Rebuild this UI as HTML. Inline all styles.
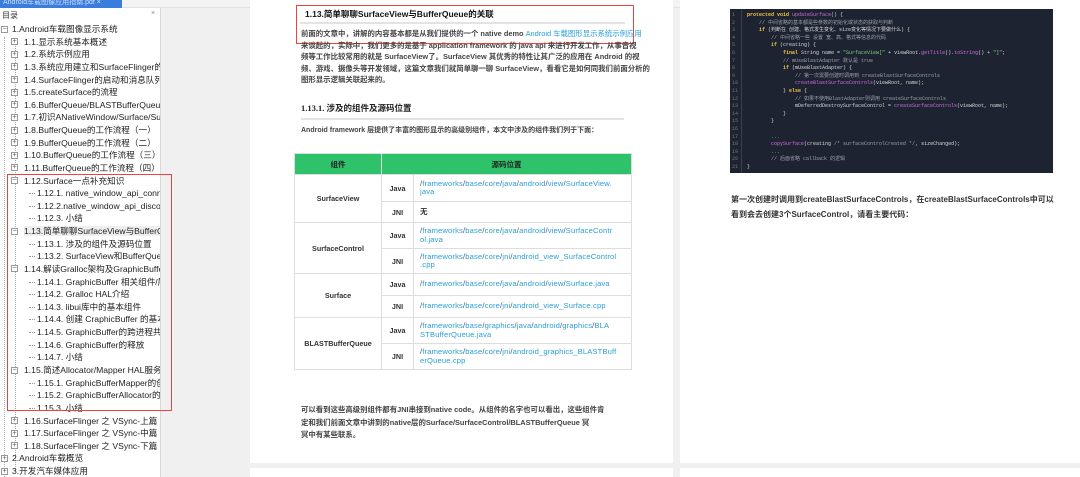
<!DOCTYPE html>
<html><head><meta charset="utf-8">
<style>
*{margin:0;padding:0;box-sizing:border-box}
body{width:1080px;height:477px;overflow:hidden;background:#f0f0f0;font-family:"Liberation Sans","Noto Sans CJK SC",sans-serif;position:relative}
.abs{position:absolute}
#top{left:0;top:0;width:1080px;height:8px;background:#f3f3f3;border-bottom:1px solid #e2e2e2}
#tab{left:0;top:0;width:122px;height:8px;background:#3b7ddd;color:#cfe0fa;font-size:7px;line-height:6px;padding-left:3px;overflow:hidden;white-space:nowrap}
#side{left:0;top:8px;width:161px;height:469px;background:#fff;border-right:1px solid #d8d8d8;overflow:hidden}
#side .hd{position:absolute;left:2px;top:2px;font-size:8px;color:#333}
#side .x{position:absolute;left:151px;top:2px;font-size:7px;color:#888}
.row{position:absolute;font-size:8.6px;color:#222;white-space:nowrap;line-height:10px}
.box{position:absolute;width:7px;height:7px;border:1px solid #999;background:#fff;font-size:7px;line-height:5px;text-align:center;color:#555}
.dash{position:absolute;height:0;border-top:1px dotted #999;width:6px}
.vl{position:absolute;width:0;border-left:1px dotted #aaa}
.red{position:absolute;border:1.5px solid #f04040}
.page{position:absolute;background:#fff}
.p{position:absolute;font-size:7.4px;color:#444;line-height:11.5px;white-space:nowrap;font-weight:bold}
table{position:absolute;left:294px;top:153px;width:338px;border-collapse:collapse;font-size:7px}
td,th{border:1px solid #ddd;color:#333}
th{background:#2ec36b;color:#222;height:21px;font-size:7.5px}
td.c{text-align:center;font-weight:bold;font-size:7.2px}
td.l{color:#2a9fd6;padding:0 6px;line-height:8.5px;font-size:7.6px;letter-spacing:0.15px}
td.l i{font-style:normal;color:#555}
#code{left:730px;top:9px;width:323px;height:164px;background:#1d2330;font-family:"Liberation Mono","Noto Sans CJK SC",monospace;font-size:5px;color:#d8d8d8;overflow:hidden}
#code .g{position:absolute;left:0;top:0;width:12px;height:100%;border-right:1px solid #3a4050}
#code div.ln{position:absolute;white-space:pre;line-height:7.6px}
</style></head><body>
<div class="abs" id="top"></div>
<div class="abs" id="tab">Android车载图像应用指南.pdf ×</div>
<div class="abs" id="side">
<div class="hd">目录</div><div class="x">×</div>
</div>
<div id="tree"></div>

<div class="page" style="left:250px;top:0;width:423px;height:463px"></div>
<div class="page" style="left:680px;top:0;width:400px;height:463px"></div>
<div class="page" style="left:250px;top:468px;width:423px;height:9px"></div>
<div class="page" style="left:680px;top:468px;width:400px;height:9px"></div>

<div class="abs" style="left:305px;top:8px;font-size:8.5px;font-weight:bold;color:#111">1.13.简单聊聊SurfaceView与BufferQueue的关联</div>
<div class="abs" style="left:300px;top:22px;width:325px;height:2px;background:#e3e3e3"></div>
<div class="red" style="left:296px;top:5px;width:338px;height:39px"></div>
<div class="p" style="left:301px;top:28px">前面的文章中，讲解的内容基本都是从我们提供的一个 native demo <span style="color:#2a9fd6;font-weight:normal">Android 车载图形显示系统示例应用</span></div>
<div class="p" style="left:301px;top:40px">来谈起的，实际中，我们更多的是基于 application framework 的 java api 来进行开发工作，从事音视</div>
<div class="p" style="left:301px;top:51px">频等工作比较常用的就是 SurfaceView了。SurfaceView 其优秀的特性让其广泛的应用在 Android 的视</div>
<div class="p" style="left:301px;top:63px">频、游戏、摄像头等开发领域，这篇文章我们就简单聊一聊 SurfaceView，看看它是如何同我们前面分析的</div>
<div class="p" style="left:301px;top:74px">图形显示逻辑关联起来的。</div>
<div class="abs" style="left:301px;top:102px;font-size:8.5px;font-weight:bold;color:#222;font-family:'Liberation Serif','Noto Sans CJK SC',serif">1.13.1. 涉及的组件及源码位置</div>
<div class="abs" style="left:301px;top:118px;width:323px;height:2px;background:#e3e3e3"></div>
<div class="p" style="left:301px;top:125px;font-size:7px">Android framework 层提供了丰富的图形显示的高级别组件，本文中涉及的组件我们列于下面：</div>

<table>
<tr><th style="width:87px">组件</th><th colspan="2">源码位置</th></tr>
<tr style="height:27px"><td class="c" rowspan="2">SurfaceView</td><td class="c" style="width:32px">Java</td><td class="l"><i>/</i>frameworks<i>/</i>base<i>/</i>core<i>/</i>java<i>/</i>android<i>/</i>view<i>/</i>SurfaceView.<br>java</td></tr>
<tr style="height:21px"><td class="c">JNI</td><td class="l" style="color:#333;font-weight:bold">无</td></tr>
<tr style="height:26px"><td class="c" rowspan="2">SurfaceControl</td><td class="c">Java</td><td class="l"><i>/</i>frameworks<i>/</i>base<i>/</i>core<i>/</i>java<i>/</i>android<i>/</i>view<i>/</i>SurfaceContr<br>ol.java</td></tr>
<tr style="height:25px"><td class="c">JNI</td><td class="l"><i>/</i>frameworks<i>/</i>base<i>/</i>core<i>/</i>jni<i>/</i>android_view_SurfaceControl<br>.cpp</td></tr>
<tr style="height:22px"><td class="c" rowspan="2">Surface</td><td class="c">Java</td><td class="l"><i>/</i>frameworks<i>/</i>base<i>/</i>core<i>/</i>java<i>/</i>android<i>/</i>view<i>/</i>Surface.java</td></tr>
<tr style="height:22px"><td class="c">JNI</td><td class="l"><i>/</i>frameworks<i>/</i>base<i>/</i>core<i>/</i>jni<i>/</i>android_view_Surface.cpp</td></tr>
<tr style="height:26px"><td class="c" rowspan="2">BLASTBufferQueue</td><td class="c">Java</td><td class="l"><i>/</i>frameworks<i>/</i>base<i>/</i>graphics<i>/</i>java<i>/</i>android<i>/</i>graphics<i>/</i>BLA<br>STBufferQueue.java</td></tr>
<tr style="height:26px"><td class="c">JNI</td><td class="l"><i>/</i>frameworks<i>/</i>base<i>/</i>core<i>/</i>jni<i>/</i>android_graphics_BLASTBuff<br>erQueue.cpp</td></tr>
</table>

<div class="p" style="left:301px;top:404px;line-height:12.5px">可以看到这些高级别组件都有JNI串接到native code。从组件的名字也可以看出，这些组件肯<br>定和我们前面文章中讲到的native层的Surface/SurfaceControl/BLASTBufferQueue 冥<br>冥中有某些联系。</div>

<div class="abs" id="code"><div class="g"></div></div>

<div class="p" style="left:731px;top:192px;font-size:8px;line-height:15px;color:#333">第一次创建时调用到createBlastSurfaceControls，在createBlastSurfaceControls中可以<br>看到会去创建3个SurfaceControl，请看主要代码：</div>

<script>
var rows=[
[0,'1.Android车载图像显示系统','-'],[1,'1.1.显示系统基本概述','+'],[1,'1.2.系统示例应用','+'],[1,'1.3.系统应用建立和SurfaceFlinger的沟通','+'],[1,'1.4.SurfaceFlinger的启动和消息队列处理','+'],[1,'1.5.createSurface的流程','+'],[1,'1.6.BufferQueue/BLASTBufferQueue之','+'],[1,'1.7.初识ANativeWindow/Surface/Surface','+'],[1,'1.8.BufferQueue的工作流程（一）','+'],[1,'1.9.BufferQueue的工作流程（二）','+'],[1,'1.10.BufferQueue的工作流程（三）','+'],[1,'1.11.BufferQueue的工作流程（四）','+'],
[1,'1.12.Surface一点补充知识','-'],[2,'1.12.1. native_window_api_connect'],[2,'1.12.2.native_window_api_disconnect'],[2,'1.12.3. 小结'],
[1,'1.13.简单聊聊SurfaceView与BufferQueue','-'],[2,'1.13.1. 涉及的组件及源码位置'],[2,'1.13.2. SurfaceView和BufferQueue的'],
[1,'1.14.解读Gralloc架构及GraphicBuffer创','-'],[2,'1.14.1. GraphicBuffer 相关组件/层级'],[2,'1.14.2. Gralloc HAL介绍'],[2,'1.14.3. libui库中的基本组件'],[2,'1.14.4. 创建 CraphicBuffer 的基本流程'],[2,'1.14.5. GraphicBuffer的跨进程共享'],[2,'1.14.6. GraphicBuffer的释放'],[2,'1.14.7. 小结'],
[1,'1.15.简述Allocator/Mapper HAL服务的','-'],[2,'1.15.1. GraphicBufferMapper的创建'],[2,'1.15.2. GraphicBufferAllocator的创建'],[2,'1.15.3. 小结'],
[1,'1.16.SurfaceFlinger 之 VSync-上篇','+'],[1,'1.17.SurfaceFlinger 之 VSync-中篇','+'],[1,'1.18.SurfaceFlinger 之 VSync-下篇','+'],[0,'2.Android车载概览','+'],[0,'3.开发汽车媒体应用','+']];
var s=document.getElementById('side'),h='';
h+='<div class="vl" style="left:4px;top:29px;height:440px"></div>';
h+='<div class="vl" style="left:15px;top:33px;height:430px"></div>';
rows.forEach(function(r,i){var y=16+i*12.63;var tx=[12,24,37][r[0]];
 if(r[0]<2){var bx=r[0]?11:1;h+='<div class="box" style="left:'+bx+'px;top:'+(y+1.5)+'px">'+(r[2]=='-'?'−':'+')+'</div>';}
 else h+='<div class="dash" style="left:29px;top:'+(y+5)+'px"></div>';
 var bg=i==16?'background:#eee;':'';
 h+='<div class="row" style="'+bg+'left:'+tx+'px;top:'+y+'px">'+r[1]+'</div>';});
s.innerHTML+=h;
document.getElementById('tree').innerHTML='<div class="red" style="left:7px;top:174px;width:165px;height:237px"></div>';
var code=['<k>protected void</k> <f>updateSurface</f>() {','    <c>// 中间省略的基本都是些参数的初始化或状态的获取与判断</c>','    <k>if</k> (判断在 创建、格式发生变化、size变化等情况下要做什么) {','        <c>// 中间省略一些 设置 宽、高、格式等信息的代码</c>','        <k>if</k> (creating) {','            <k>final</k> String name = <s>"SurfaceView["</s> + viewRoot.<f>getTitle</f>().<f>toString</f>() + <s>"]"</s>;','            <c>// mUseBlastAdapter 默认是 true</c>','            <k>if</k> (mUseBlastAdapter) {','                <c>// 第一次需要创建时调用到 createBlastSurfaceControls</c>','                <f>createBlastSurfaceControls</f>(viewRoot, name);','            } <k>else</k> {','                <c>// 如果不使用BlastAdapter则调用 createSurfaceControls</c>','                mDeferredDestroySurfaceControl = <f>createSurfaceControls</f>(viewRoot, name);','            }','        }','','        <c>...</c>','        <f>copySurface</f>(creating <c>/* surfaceControlCreated */</c>, sizeChanged);','        <c>...</c>','        <c>// 后面省略 callback 的逻辑</c>','}'];
var c=document.getElementById('code'),ch='';
code.forEach(function(l,i){var y=3+i*7.6;
 ch+='<div class="ln" style="left:2px;top:'+y+'px;color:#777">'+(i+1)+'</div>';
 ch+='<div class="ln" style="left:17px;top:'+y+'px">'+l.replace(/<k>/g,'<span style="color:#f5c542;font-weight:bold">').replace(/<f>/g,'<span style="color:#d070e0">').replace(/<s>/g,'<span style="color:#7ed37e">').replace(/<c>/g,'<span style="color:#9aa0aa">').replace(/<\/[kfsc]>/g,'</span>')+'</div>';});
c.innerHTML+=ch;
</script>
</body></html>
